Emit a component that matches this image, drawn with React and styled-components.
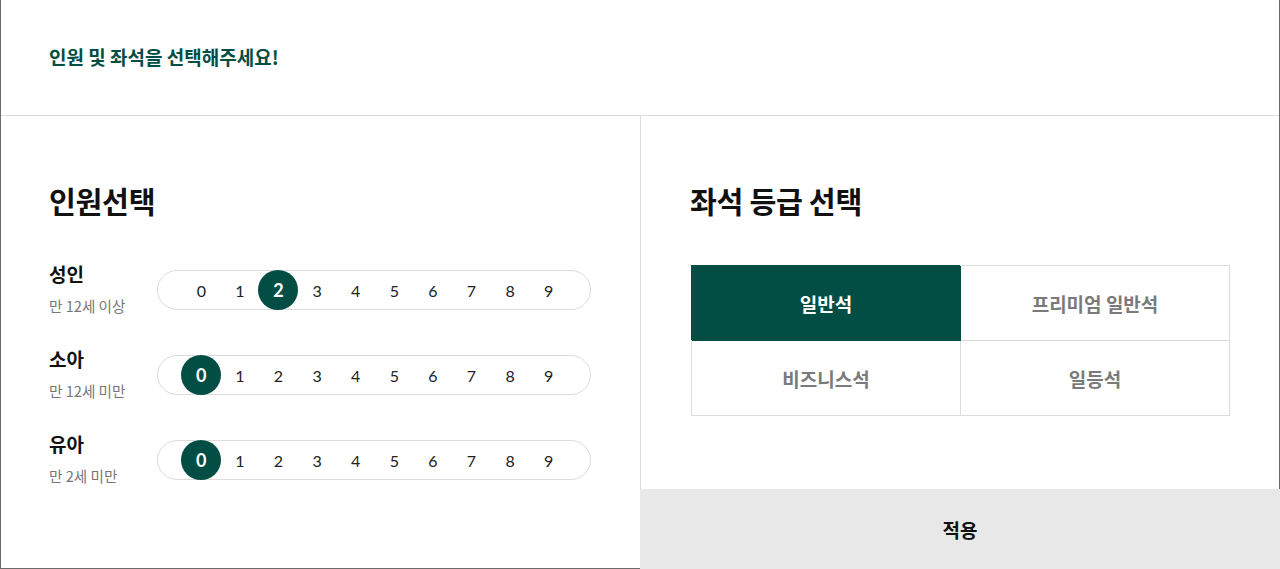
import React, { useState } from "react";
import styled, { createGlobalStyle } from "styled-components";

const GREEN = "#034e44";
const LINE = "#dcdcdc";

const GlobalStyle = createGlobalStyle`
  * { box-sizing: border-box; }
  html, body { margin: 0; padding: 0; background: #fff; }
  body {
    font-family: "Noto Sans CJK KR", "Noto Sans", sans-serif;
    color: #111;
  }
`;

const Modal = styled.div`
  width: 1280px;
  height: 569px;
  border: 1px solid #6b6b6b;
  border-top: none;
  display: flex;
  flex-direction: column;
  background: #fff;
`;

const Header = styled.header`
  height: 116px;
  flex-shrink: 0;
  border-bottom: 1px solid ${LINE};
  display: flex;
  align-items: center;
  padding: 0 0 0 48px;
`;

const HeaderTitle = styled.h1`
  margin: 0;
  font-size: 19px;
  font-weight: 700;
  color: ${GREEN};
  line-height: 1;
  position: relative;
  top: -1px;
`;

const Body = styled.div`
  flex: 1;
  display: flex;
`;

const LeftCol = styled.section`
  width: 640px;
  border-right: 1px solid ${LINE};
  padding: 65px 0 0 48px;
`;

const RightCol = styled.section`
  flex: 1;
  display: flex;
  flex-direction: column;
  padding: 65px 0 0 49px;
`;

const SectionTitle = styled.h2`
  margin: 0;
  font-size: 29.2px;
  font-weight: 700;
  line-height: 38px;
  color: #111;
  letter-spacing: -0.3px;
`;

const Rows = styled.div`
  display: flex;
  flex-direction: column;
  gap: 31px;
  margin-top: 43px;
`;

const Row = styled.div`
  display: flex;
  align-items: flex-start;
  height: 54px;
`;

const LabelBox = styled.div`
  width: 108px;
  display: flex;
  flex-direction: column;
  gap: 10px;
`;

const Label = styled.div`
  font-size: 19px;
  font-weight: 700;
  line-height: 24px;
  color: #111;
`;

const SubLabel = styled.div`
  font-size: 14.6px;
  line-height: 20px;
  color: #777;
`;

const Pill = styled.div`
  margin-top: 8px;
  width: 434px;
  height: 40px;
  border: 1px solid ${LINE};
  border-radius: 20px;
  display: flex;
  align-items: center;
  padding-left: 24px;
`;

const Num = styled.button`
  width: 38.6px;
  height: 38px;
  padding: 0;
  border: none;
  background: none;
  display: flex;
  align-items: center;
  justify-content: center;
  font-family: Lato, "Noto Sans", sans-serif;
  font-size: 16px;
  color: #222;
  cursor: pointer;
`;

const Dot = styled.span`
  flex-shrink: 0;
  width: 40px;
  height: 40px;
  border-radius: 50%;
  display: flex;
  align-items: center;
  justify-content: center;
  background: ${(p) => (p.$active ? GREEN : "transparent")};
  color: ${(p) => (p.$active ? "#fff" : "#222")};
  font-weight: ${(p) => (p.$active ? 700 : 400)};
  font-size: ${(p) => (p.$active ? "18px" : "16px")};
`;

const SeatGrid = styled.div`
  margin: 46px 0 0 1px;
  width: 539px;
  display: grid;
  grid-template-columns: 269px 269px;
  grid-auto-rows: 75px;
  border-top: 1px solid ${LINE};
  border-left: 1px solid ${LINE};
`;

const SeatCell = styled.button`
  border: none;
  border-right: 1px solid ${(p) => (p.$active ? GREEN : LINE)};
  border-bottom: 1px solid ${(p) => (p.$active ? GREEN : LINE)};
  box-shadow: ${(p) => (p.$active ? `-1px -1px 0 0 ${GREEN}` : "none")};
  background: ${(p) => (p.$active ? GREEN : "#fff")};
  color: ${(p) => (p.$active ? "#fff" : "#7a7a7a")};
  font-family: "Noto Sans CJK KR", "Noto Sans", sans-serif;
  font-size: 19px;
  font-weight: 700;
  padding: 0;
  cursor: pointer;
`;

const ApplyButton = styled.button`
  margin: auto -1px -1px -50px;
  height: 80px;
  border: none;
  background: #e8e8e8;
  color: #111;
  font-family: "Noto Sans CJK KR", "Noto Sans", sans-serif;
  font-size: 19px;
  font-weight: 700;
  cursor: pointer;
`;

const people = [
  { key: "adult", label: "성인", sub: "만 12세 이상" },
  { key: "child", label: "소아", sub: "만 12세 미만" },
  { key: "infant", label: "유아", sub: "만 2세 미만" },
];

const seats = ["일반석", "프리미엄 일반석", "비즈니스석", "일등석"];

function Counter({ value, onChange }) {
  return (
    <Pill>
      {Array.from({ length: 10 }, (_, i) => (
        <Num key={i} onClick={() => onChange(i)}>
          <Dot $active={i === value}>{i}</Dot>
        </Num>
      ))}
    </Pill>
  );
}

export default function App() {
  const [counts, setCounts] = useState({ adult: 2, child: 0, infant: 0 });
  const [seat, setSeat] = useState(0);

  return (
    <>
      <GlobalStyle />
      <Modal>
        <Header>
          <HeaderTitle>인원 및 좌석을 선택해주세요!</HeaderTitle>
        </Header>
        <Body>
          <LeftCol>
            <SectionTitle>인원선택</SectionTitle>
            <Rows>
              {people.map((p) => (
                <Row key={p.key}>
                  <LabelBox>
                    <Label>{p.label}</Label>
                    <SubLabel>{p.sub}</SubLabel>
                  </LabelBox>
                  <Counter
                    value={counts[p.key]}
                    onChange={(v) => setCounts({ ...counts, [p.key]: v })}
                  />
                </Row>
              ))}
            </Rows>
          </LeftCol>
          <RightCol>
            <SectionTitle>좌석 등급 선택</SectionTitle>
            <SeatGrid>
              {seats.map((s, i) => (
                <SeatCell key={s} $active={i === seat} onClick={() => setSeat(i)}>
                  {s}
                </SeatCell>
              ))}
            </SeatGrid>
            <ApplyButton>적용</ApplyButton>
          </RightCol>
        </Body>
      </Modal>
    </>
  );
}
